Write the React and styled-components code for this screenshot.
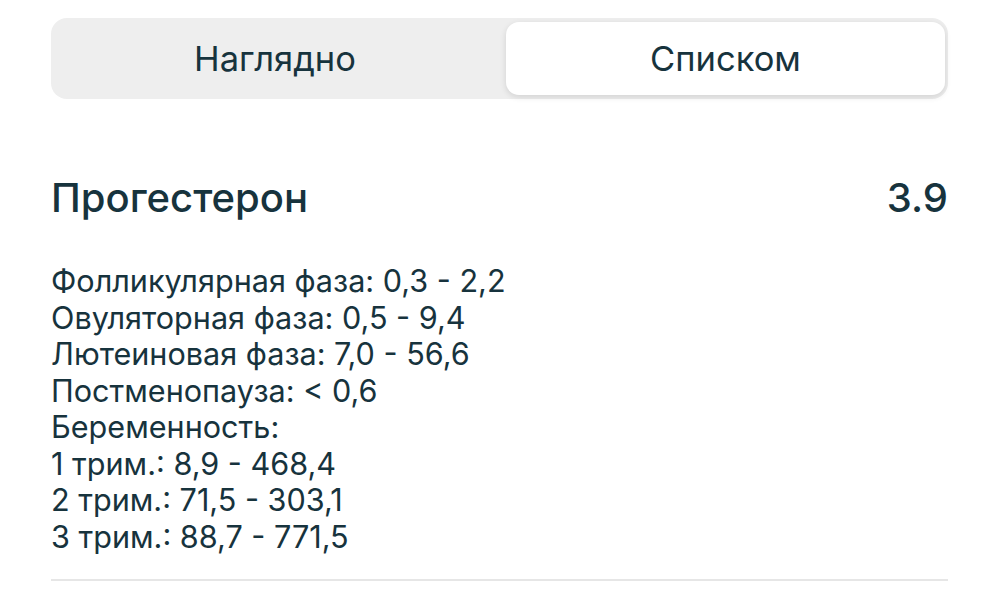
import React, { useState } from "react";
import styled, { createGlobalStyle } from "styled-components";

const GlobalStyle = createGlobalStyle`
  body {
    margin: 0;
    background: #ffffff;
    font-family: Inter, "Noto Sans", sans-serif;
    color: #17333d;
  }
`;

const Page = styled.div`
  width: 1000px;
  box-sizing: border-box;
  padding: 18px 52px 0 51px;
`;

const Segmented = styled.div`
  height: 81px;
  box-sizing: border-box;
  padding: 4px 3px;
  background: #eeeeee;
  border-radius: 16px;
  display: grid;
  grid-template-columns: 1fr 439px;
`;

const Segment = styled.button`
  border: none;
  border-radius: 13px;
  padding: 0 ${(p) => (p.$active ? "0" : "10px")} 0 0;
  font-family: inherit;
  font-size: 34.5px;
  color: #17333d;
  background: ${(p) => (p.$active ? "#ffffff" : "transparent")};
  box-shadow: ${(p) => (p.$active ? "0 2px 6px rgba(0,0,0,0.12)" : "none")};
  cursor: pointer;
`;

const Header = styled.div`
  display: flex;
  justify-content: space-between;
  align-items: center;
  margin-top: 76px;
  height: 44px;
`;

const Title = styled.h1`
  margin: 0;
  font-size: 40px;
  font-weight: 500;
`;

const Value = styled.span`
  font-size: 40px;
  font-weight: 500;
`;

const Ranges = styled.div`
  margin-top: 44px;
  font-size: 30.6px;
  line-height: 36.5px;
`;

const Line = styled.div``;

const Divider = styled.hr`
  margin: 24px 0 0;
  border: none;
  height: 2px;
  background: #e6e6e6;
`;

const lines = [
  "Фолликулярная фаза: 0,3 - 2,2",
  "Овуляторная фаза: 0,5 - 9,4",
  "Лютеиновая фаза: 7,0 - 56,6",
  "Постменопауза: < 0,6",
  "Беременность:",
  "1 трим.: 8,9 - 468,4",
  "2 трим.: 71,5 - 303,1",
  "3 трим.: 88,7 - 771,5",
];

export default function App() {
  const [tab, setTab] = useState(1);
  return (
    <>
      <GlobalStyle />
      <Page>
        <Segmented>
          <Segment $active={tab === 0} onClick={() => setTab(0)}>
            Наглядно
          </Segment>
          <Segment $active={tab === 1} onClick={() => setTab(1)}>
            Списком
          </Segment>
        </Segmented>
        <Header>
          <Title>Прогестерон</Title>
          <Value>3.9</Value>
        </Header>
        <Ranges>
          {lines.map((l) => (
            <Line key={l}>{l}</Line>
          ))}
        </Ranges>
        <Divider />
      </Page>
    </>
  );
}
